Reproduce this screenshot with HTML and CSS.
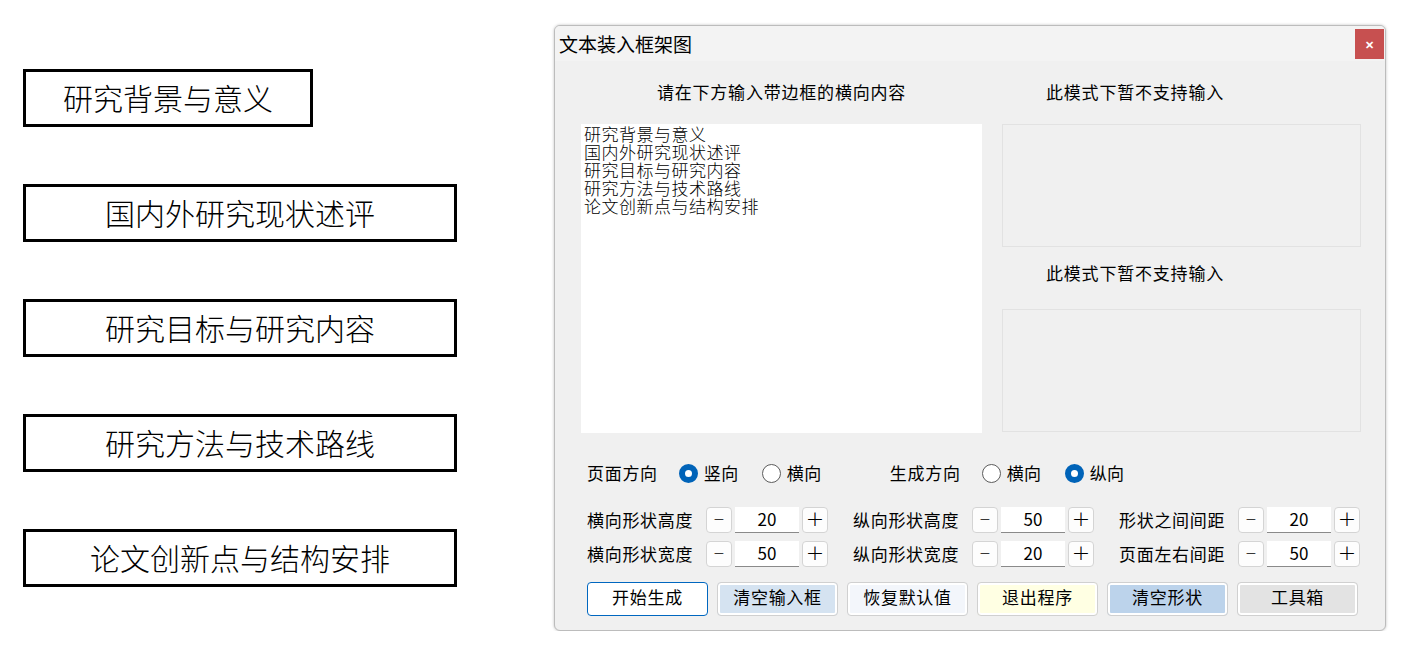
FILE: index.html
```html
<!DOCTYPE html>
<html lang="zh-CN">

<head>
    <meta charset="UTF-8">
    <title>文本装入框架图</title>
    <link rel="stylesheet" href="styles.css">
</head>

<body>
    <div class="kuangjia">
        <div class="kuang kuang-short">研究背景与意义</div>
        <div class="kuang">国内外研究现状述评</div>
        <div class="kuang">研究目标与研究内容</div>
        <div class="kuang">研究方法与技术路线</div>
        <div class="kuang">论文创新点与结构安排</div>
    </div>

    <div class="dialog">
        <div class="titlebar">
            <span class="title">文本装入框架图</span>
            <span class="close">&#x2715;</span>
        </div>

        <div class="panel">
            <div class="col-left">
                <p class="tip tip-center">请在下方输入带边框的横向内容</p>
                <textarea class="input-area">研究背景与意义
国内外研究现状述评
研究目标与研究内容
研究方法与技术路线
论文创新点与结构安排</textarea>
            </div>
            <div class="col-right">
                <p class="tip tip-indent">此模式下暂不支持输入</p>
                <div class="disabled-box"></div>
                <p class="tip tip-indent tip-second">此模式下暂不支持输入</p>
                <div class="disabled-box"></div>
            </div>
        </div>

        <div class="radio-row">
            <span class="label">页面方向</span>
            <span class="radio checked first"></span><span class="radio-text">竖向</span>
            <span class="radio"></span><span class="radio-text">横向</span>
            <span class="label group2">生成方向</span>
            <span class="radio first"></span><span class="radio-text">横向</span>
            <span class="radio checked"></span><span class="radio-text">纵向</span>
        </div>

        <div class="spin-grid">
            <div class="spin">
                <span class="label">横向形状高度</span>
                <span class="spin-btn minus">&minus;</span><span class="spin-val">20</span><span class="spin-btn">+</span>
            </div>
            <div class="spin">
                <span class="label">纵向形状高度</span>
                <span class="spin-btn minus">&minus;</span><span class="spin-val">50</span><span class="spin-btn">+</span>
            </div>
            <div class="spin">
                <span class="label">形状之间间距</span>
                <span class="spin-btn minus">&minus;</span><span class="spin-val">20</span><span class="spin-btn">+</span>
            </div>
            <div class="spin">
                <span class="label">横向形状宽度</span>
                <span class="spin-btn minus">&minus;</span><span class="spin-val">50</span><span class="spin-btn">+</span>
            </div>
            <div class="spin">
                <span class="label">纵向形状宽度</span>
                <span class="spin-btn minus">&minus;</span><span class="spin-val">20</span><span class="spin-btn">+</span>
            </div>
            <div class="spin">
                <span class="label">页面左右间距</span>
                <span class="spin-btn minus">&minus;</span><span class="spin-val">50</span><span class="spin-btn">+</span>
            </div>
        </div>

        <div class="btn-row">
            <button class="btn btn-start">开始生成</button>
            <button class="btn btn-blue">清空输入框</button>
            <button class="btn btn-light">恢复默认值</button>
            <button class="btn btn-yellow">退出程序</button>
            <button class="btn btn-shape">清空形状</button>
            <button class="btn btn-gray">工具箱</button>
        </div>
    </div>
</body>

</html>
```

FILE: styles.css
```css
body {
    margin: 0;
    background: #fff;
    display: flex;
    align-items: flex-start;
    font-family: "Noto Sans CJK SC", "Noto Sans", sans-serif;
    color: #000;
}

/* 左侧框架 */
.kuangjia {
    width: 554px;
    box-sizing: border-box;
    padding: 69px 0 0 23px;
    display: flex;
    flex-direction: column;
    gap: 57px;
}

.kuang {
    width: 434px;
    height: 58px;
    box-sizing: border-box;
    border: 3px solid #000;
    display: flex;
    align-items: center;
    justify-content: center;
    padding-bottom: 3px;
    font-size: 30px;
    font-weight: 300;
}

.kuang-short {
    width: 290px;
}

/* 窗口 */
.dialog {
    margin-top: 25px;
    width: 832px;
    height: 606px;
    box-sizing: border-box;
    border: 1px solid #bcbcbc;
    border-radius: 6px;
    background: #f0f0f0;
    box-shadow: 0 0 3px rgba(0, 0, 0, 0.25);
    overflow: hidden;
    font-size: 17px;
}

.titlebar {
    height: 35px;
    background: #f3f3f3;
    display: flex;
    align-items: center;
    justify-content: space-between;
    padding-left: 4px;
}

.title {
    font-size: 19px;
    line-height: 35px;
}

.close {
    width: 29px;
    height: 30px;
    margin-right: 1px;
    background: #c75050;
    color: #fff;
    font-size: 11px;
    font-weight: bold;
    display: flex;
    align-items: center;
    justify-content: center;
}

.panel {
    display: flex;
    gap: 20px;
    padding: 21px 0 0 26px;
}

.col-left {
    width: 401px;
    display: flex;
    flex-direction: column;
}

.col-right {
    width: 359px;
    display: flex;
    flex-direction: column;
}

.tip {
    margin: 0 0 20px 0;
    height: 22px;
    line-height: 20px;
    letter-spacing: 0.8px;
}

.tip-center {
    text-align: center;
}

.tip-indent {
    padding-left: 44px;
}

.tip-second {
    margin-top: 16px;
    margin-bottom: 24px;
}

.input-area {
    height: 309px;
    box-sizing: border-box;
    border: none;
    background: #fff;
    resize: none;
    margin: 0;
    padding: 1px 3px;
    font-family: "Noto Sans CJK SC", sans-serif;
    font-size: 17px;
    font-weight: 300;
    letter-spacing: 0.5px;
    line-height: 18px;
    color: #000;
    outline: none;
}

.disabled-box {
    height: 123px;
    box-sizing: border-box;
    border: 1px solid #e2e2e2;
}

/* 单选 */
.radio-row {
    height: 26px;
    margin: 27px 0 0 32px;
    display: flex;
    align-items: center;
    line-height: 24px;
}

.label {
    letter-spacing: 0.7px;
    white-space: nowrap;
}

.radio {
    width: 19px;
    height: 19px;
    box-sizing: border-box;
    border-radius: 50%;
    border: 1px solid #5c5c5c;
    background: #fff;
    margin-left: 23px;
    margin-right: 6px;
}

.radio.first {
    margin-left: 21px;
}

.radio.checked {
    border: 6px solid #0063b8;
}

.radio-text {
    letter-spacing: 0.5px;
}

.group2 {
    margin-left: 68px;
}

/* 数值 */
.spin-grid {
    margin: 21px 0 0 32px;
    display: grid;
    grid-template-columns: 241px 241px 241px;
    column-gap: 25px;
    row-gap: 8px;
}

.spin {
    display: flex;
    align-items: center;
    height: 26px;
    line-height: 24px;
}

.spin .label {
    width: 106px;
    margin-right: 13px;
}

.spin-btn {
    width: 26px;
    height: 26px;
    box-sizing: border-box;
    border: 1px solid #d4d4d4;
    border-radius: 4px;
    background: #fdfdfd;
    display: flex;
    align-items: center;
    justify-content: center;
    font-family: "DejaVu Sans", sans-serif;
    font-size: 22px;
    font-weight: 300;
    line-height: 1;
    padding-bottom: 2px;
}

.spin-btn.minus {
    font-size: 14px;
}

.spin-val {
    width: 64px;
    height: 26px;
    margin: 0 3px;
    box-sizing: border-box;
    background: #fff;
    border-bottom: 1px solid #8a8a8a;
    text-align: center;
    line-height: 24px;
}

/* 按钮 */
.btn-row {
    margin: 15px 0 0 32px;
    display: flex;
    gap: 9px;
}

.btn {
    width: 121px;
    height: 34px;
    box-sizing: border-box;
    border: 1px solid #d0d0d0;
    border-radius: 4px;
    box-shadow: inset 0 0 0 2px #fff;
    font-family: "Noto Sans CJK SC", sans-serif;
    font-size: 17px;
    letter-spacing: 0.7px;
    color: #000;
    padding: 0 0 5px 0;
    line-height: 24px;
}

.btn-start {
    background: #fff;
    border-color: #0067c0;
    box-shadow: none;
}

.btn-blue {
    background: #d5e3f1;
}

.btn-light {
    background: #f3f6fb;
}

.btn-yellow {
    background: #ffffe3;
}

.btn-shape {
    background: #bcd3eb;
}

.btn-gray {
    background: #e3e3e3;
}
```
